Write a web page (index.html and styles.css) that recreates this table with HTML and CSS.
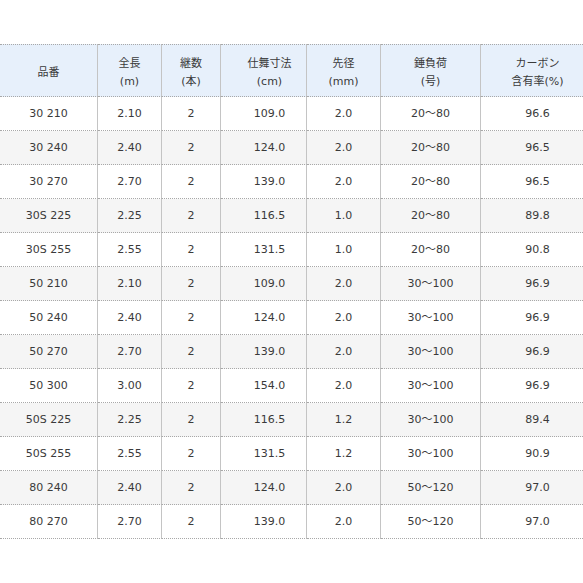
FILE: index.html
```html
<!DOCTYPE html>
<html lang="ja">
<head>
<meta charset="utf-8">
<link rel="stylesheet" href="styles.css">
</head>
<body>
<table class="spec">
<colgroup>
<col class="c1"><col class="c2"><col class="c3"><col class="c4"><col class="c5"><col class="c6"><col class="c7">
</colgroup>
<thead>
<tr>
<th>品番</th>
<th>全長<br>(m)</th>
<th>継数<br>(本)</th>
<th class="k4">仕舞寸法<br>(cm)</th>
<th>先径<br>(mm)</th>
<th>錘負荷<br>(号)</th>
<th class="k7">カーボン<br>含有率(%)</th>
</tr>
</thead>
<tbody>
<tr><td>30 210</td><td>2.10</td><td>2</td><td class="k4">109.0</td><td>2.0</td><td>20～80</td><td class="k7">96.6</td></tr>
<tr><td>30 240</td><td>2.40</td><td>2</td><td class="k4">124.0</td><td>2.0</td><td>20～80</td><td class="k7">96.5</td></tr>
<tr><td>30 270</td><td>2.70</td><td>2</td><td class="k4">139.0</td><td>2.0</td><td>20～80</td><td class="k7">96.5</td></tr>
<tr><td>30S 225</td><td>2.25</td><td>2</td><td class="k4">116.5</td><td>1.0</td><td>20～80</td><td class="k7">89.8</td></tr>
<tr><td>30S 255</td><td>2.55</td><td>2</td><td class="k4">131.5</td><td>1.0</td><td>20～80</td><td class="k7">90.8</td></tr>
<tr><td>50 210</td><td>2.10</td><td>2</td><td class="k4">109.0</td><td>2.0</td><td>30～100</td><td class="k7">96.9</td></tr>
<tr><td>50 240</td><td>2.40</td><td>2</td><td class="k4">124.0</td><td>2.0</td><td>30～100</td><td class="k7">96.9</td></tr>
<tr><td>50 270</td><td>2.70</td><td>2</td><td class="k4">139.0</td><td>2.0</td><td>30～100</td><td class="k7">96.9</td></tr>
<tr><td>50 300</td><td>3.00</td><td>2</td><td class="k4">154.0</td><td>2.0</td><td>30～100</td><td class="k7">96.9</td></tr>
<tr><td>50S 225</td><td>2.25</td><td>2</td><td class="k4">116.5</td><td>1.2</td><td>30～100</td><td class="k7">89.4</td></tr>
<tr><td>50S 255</td><td>2.55</td><td>2</td><td class="k4">131.5</td><td>1.2</td><td>30～100</td><td class="k7">90.9</td></tr>
<tr><td>80 240</td><td>2.40</td><td>2</td><td class="k4">124.0</td><td>2.0</td><td>50～120</td><td class="k7">97.0</td></tr>
<tr><td>80 270</td><td>2.70</td><td>2</td><td class="k4">139.0</td><td>2.0</td><td>50～120</td><td class="k7">97.0</td></tr>
</tbody>
</table>
</body>
</html>
```

FILE: styles.css
```css
html, body {
  margin: 0;
  padding: 0;
  background: #ffffff;
}
body {
  font-family: "DejaVu Sans", "Noto Sans CJK JP", sans-serif;
  font-size: 11px;
  color: #3a3a3a;
}
.spec {
  margin-top: 44px;
  border-collapse: separate;
  border-spacing: 0;
  table-layout: fixed;
  width: 583px;
}
.c1 { width: 98px; }
.c2 { width: 64px; }
.c3 { width: 59px; }
.c4 { width: 86px; }
.c5 { width: 74px; }
.c6 { width: 100px; }
.c7 { width: 102px; }
.spec th, .spec td {
  box-sizing: border-box;
  padding: 0;
  text-align: center;
  vertical-align: middle;
  font-weight: normal;
  border-bottom: 1px dotted #a8a8a8;
  border-right: 1px solid #c4c4c4;
}
.spec th:last-child, .spec td:last-child {
  border-right: none;
}
.spec th {
  height: 53px;
  line-height: 18px;
  background: #e7f0fb;
  border-top: 1px dotted #a8a8a8;
  padding-top: 4px;
}
.spec td {
  height: 34px;
  line-height: 14px;
}
.spec tbody tr:nth-child(even) td {
  background: #f5f5f5;
}
.spec .k4 { padding-left: 12px; }
.spec .k7 { padding-left: 11px; }
```
